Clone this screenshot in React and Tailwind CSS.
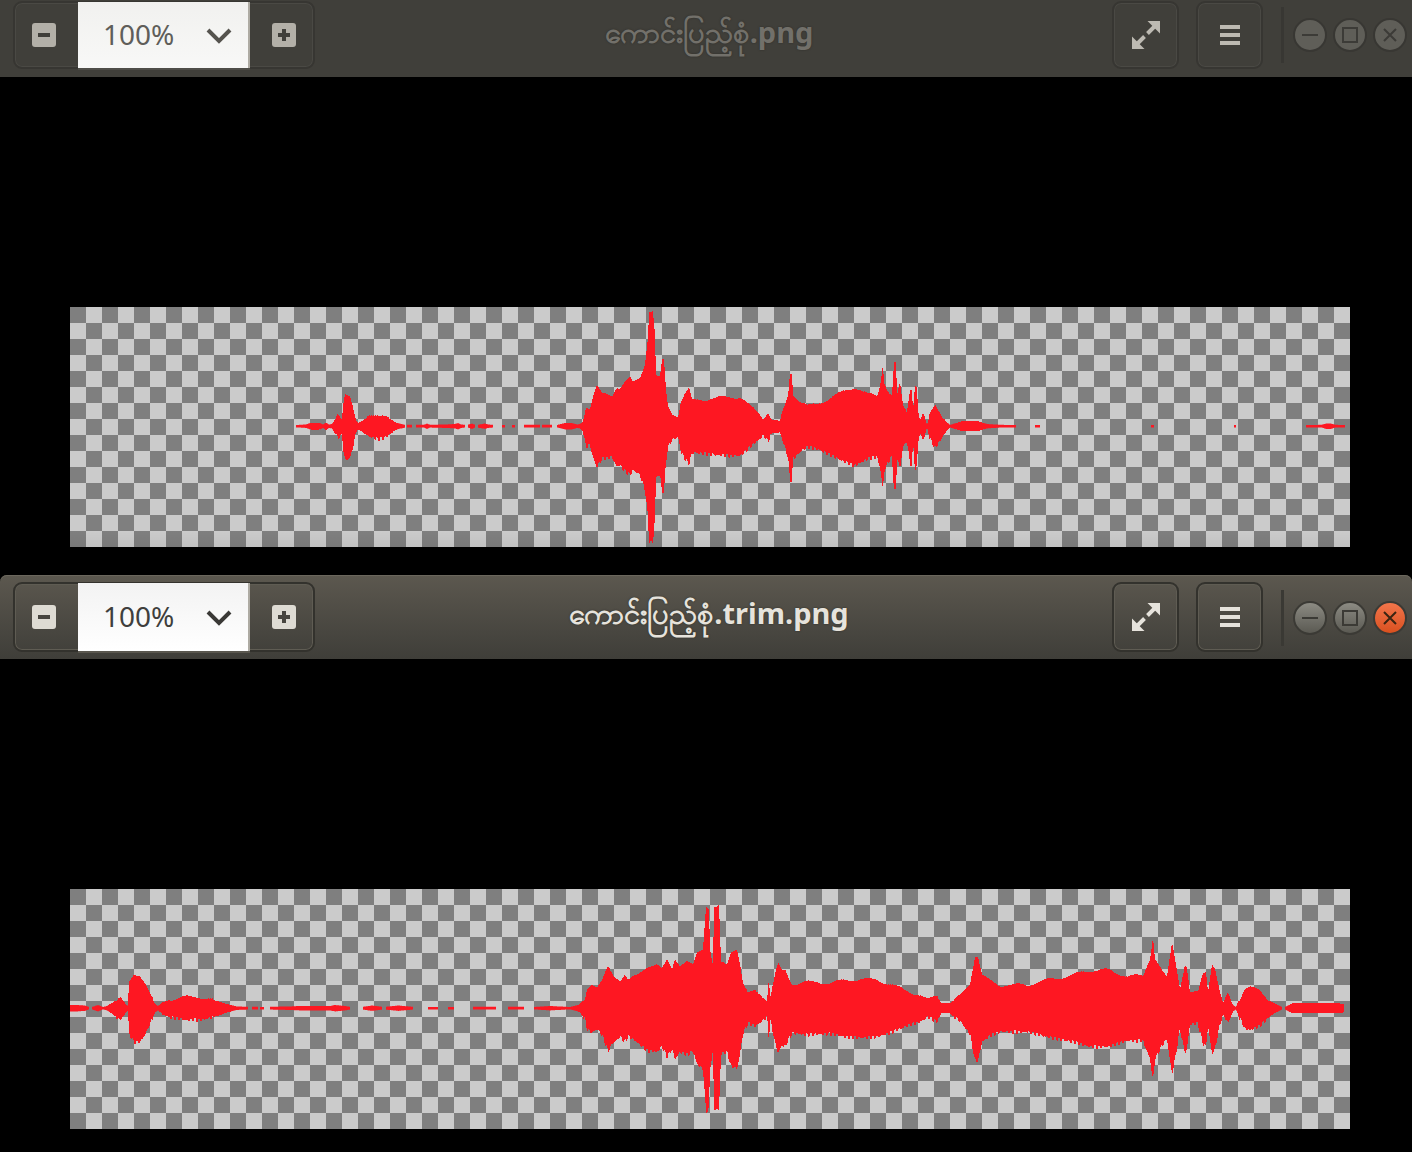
import React from "react";

const W1 = [
  [[296,1],[306,1.5],[310,3],[314,3.5],[320,3],[323,1.5],[326,3.5],[329,1.5],[332,2],[336,8],[338,11],[342,6],[343,20],[345,33],[350,31],[353,20],[356,6],[358,3],[362,5],[370,10],[377,12],[383,12],[390,7],[397,3],[405,1.2]],
  [[407,1.2],[412,1.2]],
  [[416,1.2],[424,1.2],[427,2.5],[430,1.2],[445,1.5],[455,2],[458,3],[461,1.5],[465,1.2]],
  [[468,1.2],[472,2.5],[475,1.2]],
  [[478,1.2],[485,2.5],[488,1.5],[493,1.2]],
  [[502,1],[505,1]],[[512,1],[515,1]],[[524,1.2],[540,1.2]],[[542,1.2],[552,1.2]],
  [[557,1],[565,3],[572,3],[577,1.5],[580,2],[583,5],[586,20],[590,18],[593,30],[597,41],[598,38],[602,32],[608,31],[612,30],[617,40],[619,38],[625,44],[630,48],[633,43],[640,48],[645,63],[648,90],[649,115],[653,115],[655,90],[656,50],[660,48],[662,65],[664,65],[666,35],[668,20],[672,13],[678,10],[681,25],[685,32],[689,37],[692,26],[697,26],[717,28],[730,29],[740,29],[750,20],[760,12],[763,8],[768,14],[772,6],[777,6],[780,5],[783,15],[788,30],[790,53],[792,53],[793,32],[800,25],[807,20],[817,22],[830,28],[847,36],[855,39],[867,32],[877,30],[880,40],[883,63],[884,45],[888,35],[892,30],[894,63],[896,63],[897,30],[900,42],[903,20],[907,14],[910,37],[912,37],[913,16],[915,42],[917,40],[918,16],[920,6],[923,13],[925,8],[927,1],[930,12],[935,21],[940,14],[945,6],[950,1],[953,2],[963,5],[977,5],[987,2],[1000,1.2],[1016,1]],
  [[1035,1],[1040,1]],[[1151,1],[1154,1]],[[1234,1],[1236,1]],
  [[1306,1],[1322,1.2],[1326,2.5],[1331,2.5],[1335,1.2],[1345,1]],
];

const W2 = [
  [[70,3],[77,3],[85,2.5],[89,1]],
  [[92,1],[98,3],[103,1],[107,2],[115,7],[120,11],[125,5],[128,2],[129,25],[134,33],[140,33],[145,26],[150,15],[155,4],[158,2],[163,6],[173,9],[187,11],[203,11],[217,7],[227,4],[237,1.5],[248,1.2]],
  [[252,1.2],[258,1.2]],[[260,1],[264,1]],
  [[270,1.2],[288,1.5],[300,2],[330,2],[335,3],[345,2],[350,1.2]],
  [[363,1.2],[372,2.5],[382,1.2]],
  [[386,1.2],[398,2.5],[413,1.2]],
  [[428,1],[438,1]],[[448,1],[454,1]],[[473,1.2],[496,1.2]],[[508,1.2],[524,1.2]],
  [[534,1],[550,2],[570,1],[578,3],[580,4],[585,10],[587,20],[592,24],[597,20],[602,26],[608,42],[613,34],[620,28],[625,33],[628,27],[637,33],[647,42],[657,43],[662,38],[667,48],[672,40],[675,50],[680,43],[687,46],[693,42],[697,55],[703,60],[706,103],[709,100],[710,60],[713,42],[714,100],[716,100],[717,100],[719,102],[721,45],[727,43],[731,57],[737,60],[740,45],[743,25],[748,14],[755,17],[760,14],[767,8],[769,32],[770,10],[775,33],[778,44],[782,36],[785,38],[792,24],[807,26],[830,25],[847,28],[863,29],[877,28],[890,24],[907,17],[920,13],[928,8],[937,13],[941,5],[950,5],[960,12],[970,25],[975,52],[978,52],[982,33],[990,27],[1000,23],[1027,23],[1047,28],[1073,33],[1090,38],[1107,38],[1127,32],[1143,32],[1150,50],[1153,72],[1155,50],[1163,35],[1167,30],[1172,65],[1175,50],[1180,20],[1185,44],[1187,40],[1190,15],[1198,15],[1203,35],[1206,37],[1208,17],[1212,45],[1215,40],[1220,15],[1223,5],[1228,14],[1233,3],[1236,1],[1238,6],[1245,20],[1250,21],[1260,17],[1270,7],[1282,1]],
  [[1285,1],[1293,5],[1307,5],[1337,5],[1344,4]],
];

function envelopeAt(points, x) {
  for (let i = 0; i < points.length - 1; i++) {
    const [x0, a] = points[i];
    const [x1, b] = points[i + 1];
    if (x >= x0 && x <= x1) return a + ((b - a) * (x - x0)) / (x1 - x0 || 1);
  }
  return points[points.length - 1][1];
}

// A stepped outline, so the edge has the toothed look of a rendered wave form.
function wavePath(segments, cy) {
  return segments
    .map((points) => {
      const start = points[0][0];
      const end = points[points.length - 1][0];
      const top = [];
      const bottom = [];
      for (let x = start; x < end; x++) {
        const amp = envelopeAt(points, x + 0.5);
        const cell = Math.floor(x / 2);
        const t = amp > 8 ? Math.sin(cell * 12.9898) * 1.6 : 0;
        const b = amp > 8 ? Math.sin(cell * 78.233) * 1.6 : 0;
        let yTop = cy - amp - t;
        let yBot = cy + amp + (amp > 5 ? 1 : 0.4) + b;
        if (amp > 3) {
          yTop = Math.round(yTop);
          yBot = Math.round(yBot);
        }
        const px = x - 70;
        top.push(`${px},${yTop.toFixed(1)}`, `${px + 1},${yTop.toFixed(1)}`);
        bottom.unshift(`${px + 1},${yBot.toFixed(1)}`, `${px},${yBot.toFixed(1)}`);
      }
      return "M" + top.concat(bottom).join("L") + "Z";
    })
    .join("");
}

function Checker({ segments, shaded }) {
  return (
    <div className="relative w-[1280px] h-[240px] bg-[conic-gradient(#cbcbcb_25%,#7f7f7f_0_50%,#cbcbcb_0_75%,#7f7f7f_0)] bg-[length:32px_32px]">
      <svg width="1280" height="240" viewBox="0 0 1280 240" className="block">
        <path d={wavePath(segments, 119)} fill="#fe1722" />
      </svg>
      {shaded && <div className="absolute left-0 right-0 bottom-0 h-[16px] bg-gradient-to-b from-transparent to-black/5" />}
    </div>
  );
}

function ExpandIcon({ color }) {
  return (
    <svg width="28" height="28" viewBox="0 0 28 28" fill={color}>
      <polygon points="15.5,0 28,0 28,12.5" />
      <polygon points="24.4,6.4 21.6,3.6 14.1,11.1 16.9,13.9" />
      <polygon points="0,15.5 0,28 12.5,28" />
      <polygon points="6.4,24.4 3.6,21.6 11.1,14.1 13.9,16.9" />
    </svg>
  );
}

function ToolButton({ active, children }) {
  return (
    <div
      className={
        active
          ? "w-[67px] h-[70px] rounded-[9px] border-2 border-[#33322d] shadow-[inset_0_0_0_1px_#5f5c53] flex items-center justify-center"
          : "w-[67px] h-[68px] rounded-[9px] border-2 border-[#373632] shadow-[inset_0_0_0_1px_#4a4944] flex items-center justify-center"
      }
    >
      {children}
    </div>
  );
}

function ZoomGlyph({ active, plus }) {
  return (
    <div
      className={
        active
          ? "w-6 h-6 rounded-[3px] bg-[#dedbd3] relative"
          : "w-6 h-6 rounded-[3px] bg-[#b3b0a8] relative"
      }
    >
      <div className={active ? "absolute left-[6px] top-[10px] w-3 h-1 bg-[#47453f]" : "absolute left-[6px] top-[10px] w-3 h-1 bg-[#403f3a]"} />
      {plus && <div className={active ? "absolute left-[10px] top-[6px] w-1 h-3 bg-[#47453f]" : "absolute left-[10px] top-[6px] w-1 h-3 bg-[#403f3a]"} />}
    </div>
  );
}

function WindowDot({ active, kind }) {
  const stroke = kind === "close" && active ? "#3a2412" : active ? "#3b3a35" : "#3c3b37";
  const cls =
    kind === "close" && active
      ? "w-[34px] h-[34px] rounded-full border-2 border-[#3b3a35] bg-gradient-to-b from-[#f2754a] to-[#d9501e] flex items-center justify-center"
      : active
        ? "w-[34px] h-[34px] rounded-full border-2 border-[#3b3a35] bg-gradient-to-b from-[#8c8b83] to-[#5b5a53] flex items-center justify-center"
        : "w-[34px] h-[34px] rounded-full border-2 border-[#383733] bg-[#5f5e58] flex items-center justify-center";
  return (
    <div className={cls}>
      <svg width="20" height="20" viewBox="0 0 20 20" fill="none" stroke={stroke} strokeWidth="2">
        {kind === "min" && <line x1="2" y1="10" x2="18" y2="10" />}
        {kind === "max" && <rect x="3" y="3" width="14" height="14" />}
        {kind === "close" && <path d="M4 4L16 16M16 4L4 16" />}
      </svg>
    </div>
  );
}

function Header({ active, title, ext }) {
  const iconColor = active ? "#e6e3dc" : "#bdbab2";
  return (
    <div
      className={
        active
          ? "h-[84px] flex items-end pb-[7px] pl-[13px] rounded-t-[7px] bg-gradient-to-b from-[#5c584f] to-[#3f3e39] shadow-[inset_0_1px_0_#6b675d]"
          : "h-[77px] flex items-end pb-2 pl-[13px] bg-[#403f3a]"
      }
    >
      <div
        className={
          active
            ? "w-[302px] h-[70px] rounded-[9px] border-2 border-[#33322d] shadow-[inset_0_0_0_1px_#5f5c53] flex items-stretch"
            : "w-[302px] h-[68px] rounded-[9px] border-2 border-[#373632] shadow-[inset_0_0_0_1px_#4a4944] flex items-stretch"
        }
      >
        <div className="flex-1 flex items-center justify-center pr-[5px]">
          <ZoomGlyph active={active} />
        </div>
        <div
          className={
            active
              ? "w-[172px] -my-[1px] pl-[25px] pr-[16px] flex items-center justify-between bg-gradient-to-b from-[#f3f3f3] to-[#ffffff] border-r-2 border-r-[#aeaba3] shadow-[0_2px_0_#5a574f]"
              : "w-[172px] -my-[1px] pl-[25px] pr-[16px] flex items-center justify-between bg-gradient-to-b from-[#f1f1ef] to-[#f8f8f7] border-r-2 border-r-[#aeaba3] shadow-[0_2px_0_#4f4e49]"
          }
        >
          <span
            className={
              active
                ? "font-['Noto_Sans',sans-serif] font-normal text-[28px] leading-none -mt-[2px] text-[#3f3f3d]"
                : "font-['Noto_Sans',sans-serif] font-normal text-[28px] leading-none -mt-[2px] text-[#5f5e5a]"
            }
          >
            100%
          </span>
          <svg width="26" height="16" viewBox="0 0 26 16" fill="none" stroke={active ? "#3a3936" : "#55534e"} strokeWidth="4" className="mt-[2px]">
            <path d="M2 2L13 13L24 2" />
          </svg>
        </div>
        <div className="flex-1 flex items-center justify-center pl-[5px]">
          <ZoomGlyph active={active} plus />
        </div>
      </div>

      <div className="flex-1 self-stretch flex items-center justify-center pr-[9px]">
        <span
          className={
            active
              ? "font-['Noto_Sans',sans-serif] font-bold text-[29px] leading-none -mt-[2px] text-[#e6e3dc] [text-shadow:0_0_2px_#2c2b27]"
              : "font-['Noto_Sans',sans-serif] font-bold text-[29px] leading-none -mt-[6px] text-[#72706a] [text-shadow:0_0_2px_#2c2b27]"
          }
        >
          {title}
          {ext}
        </span>
      </div>

      <div className="flex items-center gap-[17px]">
        <ToolButton active={active}>
          <ExpandIcon color={iconColor} />
        </ToolButton>
        <ToolButton active={active}>
          <div className="flex flex-col gap-1">
            <div className="w-5 h-1" style={{ background: iconColor }} />
            <div className="w-5 h-1" style={{ background: iconColor }} />
            <div className="w-5 h-1" style={{ background: iconColor }} />
          </div>
        </ToolButton>
      </div>

      <div className={active ? "ml-[18px] mr-[5px] pt-[8px] flex items-center self-stretch" : "ml-[18px] mr-[5px] flex items-center self-stretch"}>
        <div className={active ? "w-[3px] h-[56px] bg-[#3a3934]" : "w-[3px] h-[56px] bg-[#383733]"} />
        <div className="ml-[9px] flex items-center gap-[6px]">
          <WindowDot active={active} kind="min" />
          <WindowDot active={active} kind="max" />
          <WindowDot active={active} kind="close" />
        </div>
      </div>
    </div>
  );
}

const MY = "ကောင်းပြည့်စုံ";

export default function App() {
  return (
    <div className="w-[1412px] h-[1152px] bg-black overflow-hidden">
      <Header title={MY} ext=".png" />
      <div className="h-[498px] pt-[230px] pl-[70px]">
        <Checker segments={W1} shaded />
      </div>
      <Header active title={MY} ext=".trim.png" />
      <div className="h-[493px] pt-[230px] pl-[70px]">
        <Checker segments={W2} />
      </div>
    </div>
  );
}
